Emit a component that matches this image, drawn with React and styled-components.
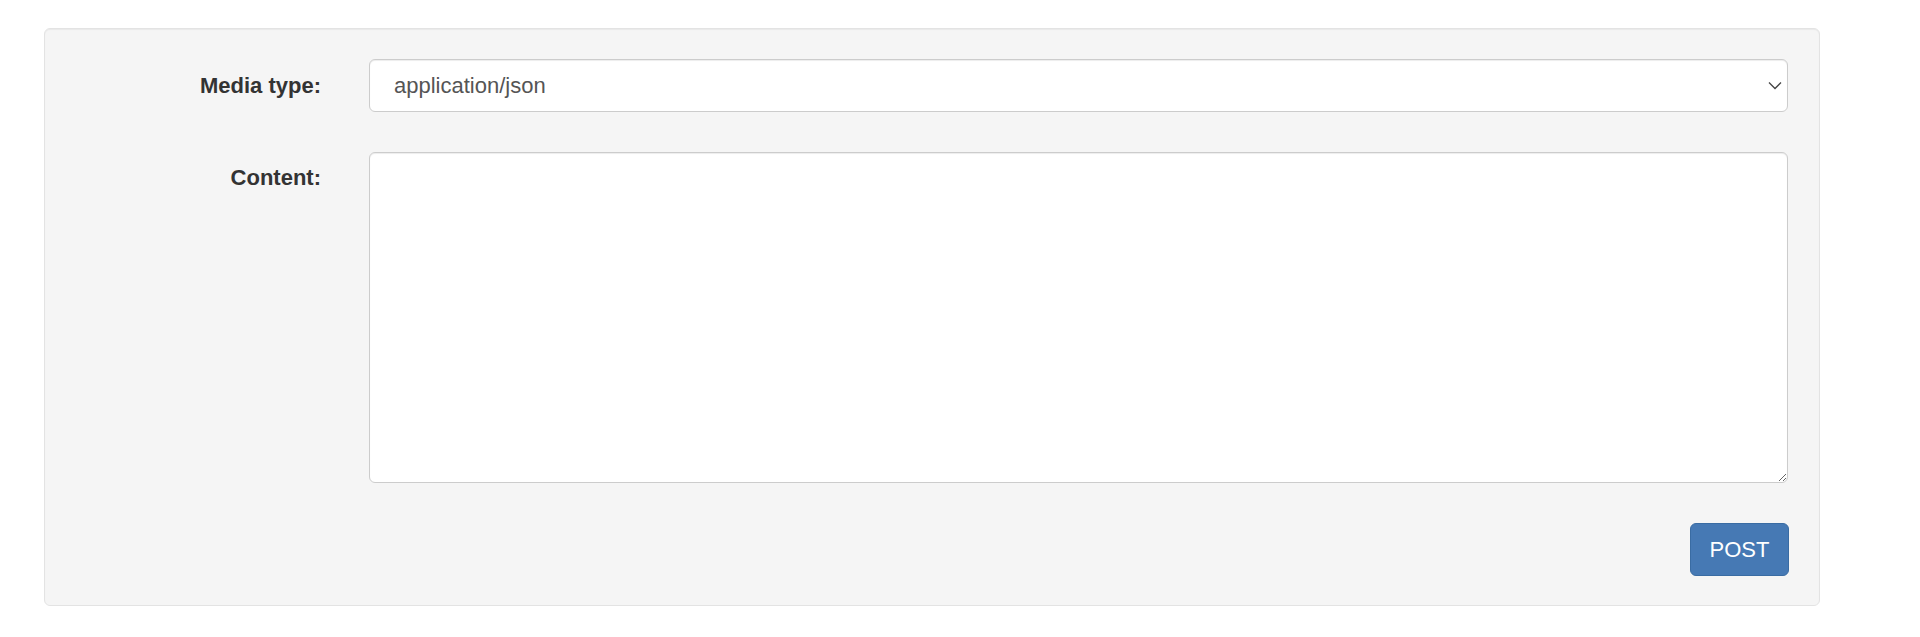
import React, { useState } from 'react';
import styled, { createGlobalStyle } from 'styled-components';

const GlobalStyle = createGlobalStyle`
  html, body {
    margin: 0;
    padding: 0;
    background: #fff;
    font-family: "Liberation Sans", Arial, Helvetica, sans-serif;
    color: #333;
  }
`;

const Page = styled.div`
  padding: 28px 0 0 44px;
`;

const Well = styled.form`
  box-sizing: border-box;
  width: 1776px;
  background: #f5f5f5;
  border: 1px solid #e3e3e3;
  border-radius: 6px;
  box-shadow: inset 0 1px 1px rgba(0, 0, 0, 0.05);
  padding: 30px 31px 29px 0;
  display: grid;
  grid-template-columns: 276px 1fr;
  column-gap: 48px;
  row-gap: 40px;
`;

const Label = styled.label`
  font-size: 22px;
  font-weight: bold;
  line-height: 30px;
  text-align: right;
  padding-top: ${(p) => (p.$top ? '11px' : '0')};
  align-self: ${(p) => (p.$top ? 'start' : 'center')};
`;

const SelectWrap = styled.div`
  position: relative;
`;

const Select = styled.select`
  box-sizing: border-box;
  width: 100%;
  height: 53px;
  padding: 0 48px 0 24px;
  font-family: inherit;
  font-size: 22px;
  color: #555;
  background: #fff;
  border: 1.5px solid #ccc;
  border-radius: 6px;
  box-shadow: inset 0 1px 1px rgba(0, 0, 0, 0.075);
  appearance: none;
  -webkit-appearance: none;
  outline: none;
`;

const Chevron = styled.svg`
  position: absolute;
  right: 6px;
  top: 50%;
  margin-top: -5px;
  width: 14px;
  height: 9px;
  pointer-events: none;
`;

const TextArea = styled.textarea`
  box-sizing: border-box;
  width: 100%;
  height: 331px;
  padding: 9px 18px;
  font-family: inherit;
  font-size: 22px;
  color: #555;
  background: #fff;
  border: 1.5px solid #ccc;
  border-radius: 6px;
  box-shadow: inset 0 1px 1px rgba(0, 0, 0, 0.075);
  resize: vertical;
  outline: none;
  display: block;
`;

const Actions = styled.div`
  grid-column: 2;
  display: flex;
  justify-content: flex-end;
`;

const Button = styled.button`
  width: 99px;
  height: 53px;
  margin-right: -1px;
  font-family: inherit;
  font-size: 22px;
  color: #fff;
  background: #4679b4;
  border: 1.5px solid #3a6ca3;
  border-radius: 6px;
  cursor: pointer;
  &:hover {
    background: #3d6da4;
  }
`;

const App = () => {
  const [media, setMedia] = useState('application/json');
  const [content, setContent] = useState('');
  return (
    <>
      <GlobalStyle />
      <Page>
        <Well onSubmit={(e) => e.preventDefault()}>
          <Label htmlFor="media">Media type:</Label>
          <SelectWrap>
            <Select id="media" value={media} onChange={(e) => setMedia(e.target.value)}>
              <option value="application/json">application/json</option>
              <option value="application/x-www-form-urlencoded">application/x-www-form-urlencoded</option>
              <option value="multipart/form-data">multipart/form-data</option>
            </Select>
            <Chevron viewBox="0 0 14 9">
              <path d="M1 1.5 L7 7.5 L13 1.5" fill="none" stroke="#444" strokeWidth="1.3" />
            </Chevron>
          </SelectWrap>
          <Label htmlFor="content" $top>Content:</Label>
          <TextArea id="content" value={content} onChange={(e) => setContent(e.target.value)} />
          <Actions>
            <Button type="submit">POST</Button>
          </Actions>
        </Well>
      </Page>
    </>
  );
};

export default App;
